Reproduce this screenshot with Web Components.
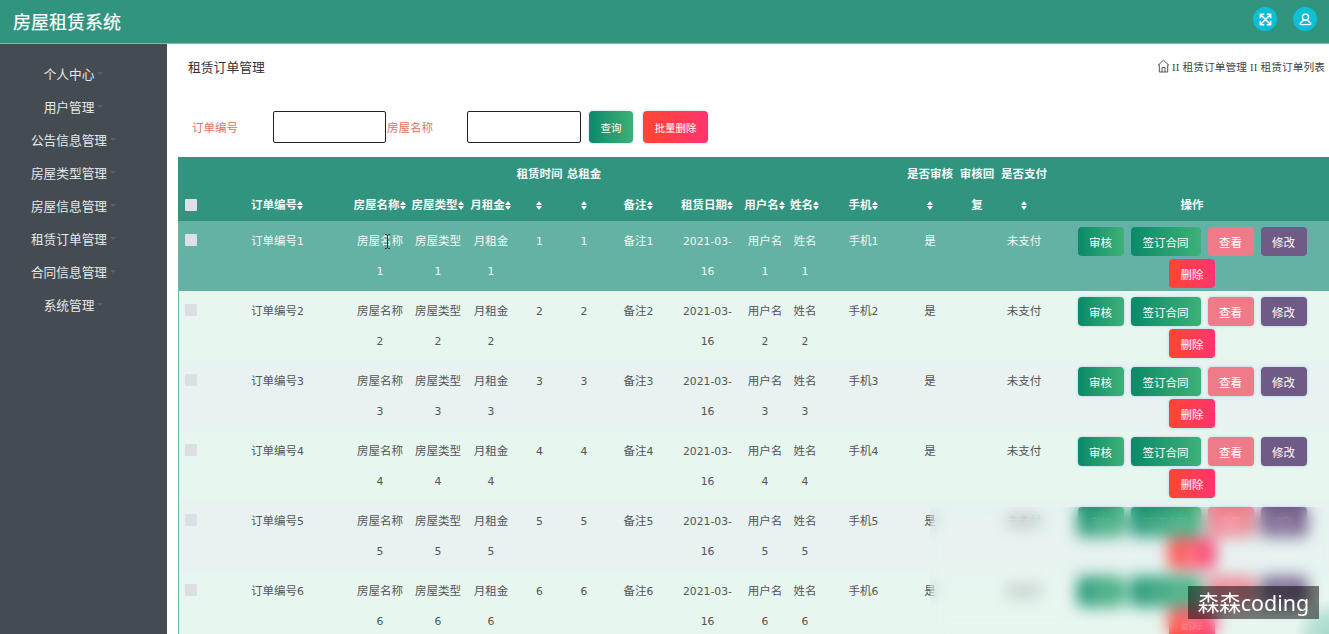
<!DOCTYPE html>
<html lang="zh"><head><meta charset="utf-8">
<style>
html,body{margin:0;height:100%;overflow:hidden;background:#fff;font-family:"Liberation Sans","Noto Sans CJK SC",sans-serif}
app-shell{display:block;height:634px}
</style></head>
<body>
<app-shell></app-shell>
<script>
const def=(name,html,setup)=>customElements.define(name,class extends HTMLElement{
  connectedCallback(){ if(this.shadowRoot) return; const r=this.attachShadow({mode:'open'}); r.innerHTML=typeof html==='function'?html(this):html; setup&&setup(r,this);} });

def('top-bar',`<style>
:host{display:flex;align-items:center;height:43px;background:#31947f;border-bottom:1px solid #7dbdb0;color:#fff}
.t{font-size:18px;margin:0 0 2px 13px;flex:1;-webkit-text-stroke:.2px #fff}
.c{width:24px;height:24px;border-radius:50%;background:#0fbfd6;display:flex;align-items:center;justify-content:center;margin:0 16px 5px 0}
.c:last-child{margin-right:12px}
svg{width:15px;height:15px;fill:none;stroke:#fff;stroke-width:1.4;stroke-linecap:round;stroke-linejoin:round}
</style><div class="t">房屋租赁系统</div>
<div class="c"><svg viewBox="0 0 16 16" style="stroke-width:1.6"><path d="M3.500 3.500l9 9M12.500 3.500l-9 9M2.500 6V2.500H6M10 2.500h3.500V6M2.500 10v3.500H6M13.500 10v3.500H10"/></svg></div>
<div class="c"><svg viewBox="0 0 16 16"><circle cx="8" cy="5.500" r="3.300"/><path d="M5.800 8.300C5.500 10 3.200 10.500 2.500 12c-.3.700 0 1.500.8 1.500h9.400c.8 0 1.100-.8.800-1.500-.7-1.500-3-2-3.300-3.700"/></svg></div>`);

def('side-nav',h=>`<style>
:host{display:block;width:167px;background:#444c52;padding:13px 30px 0 0;flex:none;box-sizing:border-box}
div{height:33px;display:flex;align-items:center;justify-content:center;color:#e6e8e8;font-size:12.700px}
i{flex:none;width:0;height:0;border:3.500px solid transparent;border-top-color:#5a6267;border-bottom:0;margin:0 -10px 0 3px}
</style>`+['个人中心','用户管理','公告信息管理','房屋类型管理','房屋信息管理','租赁订单管理','合同信息管理','系统管理'].map(t=>`<div><span>${t}</span><i></i></div>`).join(''));

def('crumb-bar',`<style>
:host{display:flex;align-items:center;height:46px;padding:0 4px 2px 21px;box-sizing:border-box;color:#333}
.t{flex:1;font-size:12.800px}
.b{font-size:10.700px;display:flex;align-items:center;gap:2px;color:#444;letter-spacing:.08px}
em{font:normal 10.700px "Liberation Serif",serif}
svg{width:13px;height:14px;fill:none;stroke:#555;stroke-width:1}
</style><span class="t">租赁订单管理</span>
<span class="b"><svg viewBox="0 0 13 14"><path d="M.8 6.500L6.500 1.200 12.200 6.500M2.300 5.500V13h8.400V5.500M5 13V8.500h3V13"/></svg><span><em>II</em> 租赁订单管理 <em>II</em> 租赁订单列表</span></span>`);

def('grad-btn',`<style>
:host{display:inline-flex;align-items:center;justify-content:center;height:29px;width:46px;box-sizing:border-box;border-radius:4px;color:#fff;font-size:11.500px;line-height:normal;
 background:var(--bg);box-shadow:0 0 3px rgba(120,170,240,.55)}
</style><slot></slot>`);

def('search-bar',`<style>
:host{display:flex;align-items:center;height:32px;margin:21px 0 14px;padding-left:25px;font-size:11.500px;color:#e2735c}
input{box-sizing:border-box;width:113px;height:32px;border:1px solid #222;border-radius:2px;background:#fff;padding:0;margin:0}
input+span+input{width:114px}
.l1{width:81px}.l2{width:80px;margin-left:1px}
grad-btn{height:32px;font-size:10.500px}
.q{width:44px;margin-left:8px;--bg:linear-gradient(90deg,#0a8a6a,#3fb077)}
.d{width:65px;margin-left:10px;--bg:linear-gradient(90deg,#ff4530,#ff3470)}
</style><span class="l1">订单编号</span><input aria-label="订单编号"><span class="l2">房屋名称</span><input aria-label="房屋名称">
<grad-btn class="q">查询</grad-btn><grad-btn class="d">批量删除</grad-btn>`);

const widths=[26,147,58,58,48,49,40,69,69,46,34,83,50,44,50,286];
const heads=['','订单编号','房屋名称','房屋类型','月租金','租赁时间','总租金','备注','租赁日期','用户名','姓名','手机','是否审核','审核回复','是否支付','操作'];
const sort=new Set([1,2,3,4,5,6,7,8,9,10,11,12,14]);
const arrows=`<span class="s"></span>`;
const rows=[1,2,3,4,5,6];
const num=t=>`<span class="d">${t}</span>`;
def('order-table',`<style>
:host{display:block;margin-left:11px;width:1157px}
table{border-collapse:collapse;table-layout:fixed;width:1157px;font-size:11.500px;text-align:center;color:#555}
th{background:#31947f;color:#f4f8f7;font-weight:700;line-height:31px;padding:2px 0 0;vertical-align:bottom;height:64px;box-sizing:border-box;word-break:break-all}
td{padding:5px 0;line-height:30px;height:60px;vertical-align:top;overflow:hidden}
td:last-child{padding:0}
.d{font-family:"DejaVu Sans",sans-serif;font-size:10.800px;line-height:1}
tbody tr{background:#e7f2f1}
tbody tr:nth-child(even){background:#e8f6f0}
tbody tr:first-child{background:#63b2a3;color:#f2f8f6}
tbody td:first-child{box-shadow:inset 1px 0 0 #6fb5a7}
.cb{display:block;width:12px;height:12px;margin:8px 0 0 7px;background:#dde1e6;border-radius:1px}
tbody tr:not(:first-child) .cb{background:#dcdfe3}
th .cb{margin:0 0 10px 7px}
.s{display:inline-block;width:7px;height:9px;vertical-align:-1px;position:relative}
.s:before,.s:after{content:"";position:absolute;left:0;border:3.500px solid transparent}
.s:before{top:0;border-bottom:4px solid #f4f8f7;border-top:0}
.s:after{bottom:0;border-top:4px solid #f4f8f7;border-bottom:0}
.ops{display:flex;flex-wrap:wrap;justify-content:center;align-content:flex-start;gap:3px 7px;padding:6px 28px 0;box-sizing:border-box;height:70px}
grad-btn.a{--bg:linear-gradient(90deg,#0a8a68,#3fb078)}
grad-btn.b{width:70px;--bg:linear-gradient(90deg,#0a8a68,#3fb078)}
grad-btn.c{--bg:#ef7b88}
grad-btn.e{--bg:#705a86}
grad-btn.f{--bg:linear-gradient(90deg,#ff4530,#ff3470)}
td.n{padding-left:4px;padding-right:4px}
td.p{padding-left:8px;padding-right:8px}
</style>
<table><colgroup>${widths.map(w=>`<col style="width:${w}px">`).join('')}</colgroup>
<thead><tr>${heads.map((h,i)=>i==0?`<th><span class="cb"></span></th>`:`<th>${h}${sort.has(i)?arrows:''}</th>`).join('')}</tr></thead>
<tbody>${rows.map(n=>`<tr><td><span class="cb"></span></td><td>订单编号${num(n)}</td><td class="n">房屋名称 ${num(n)}</td><td class="n">房屋类型 ${num(n)}</td><td class="n">月租金 ${num(n)}</td><td>${num(n)}</td><td>${num(n)}</td><td>备注${num(n)}</td><td class="p">${num('2021-03-16')}</td><td class="n">用户名 ${num(n)}</td><td class="n">姓名 ${num(n)}</td><td>手机${num(n)}</td><td>是</td><td></td><td>未支付</td>
<td><div class="ops"><grad-btn class="a">审核</grad-btn><grad-btn class="b">签订合同</grad-btn><grad-btn class="c">查看</grad-btn><grad-btn class="e">修改</grad-btn><grad-btn class="f">删除</grad-btn></div></td></tr>`).join('')}</tbody></table>`);

def('blur-patch',`<style>:host{display:block;position:absolute;left:930px;top:507px;right:0;bottom:0;backdrop-filter:blur(8px);background:radial-gradient(circle at 100% 100%,rgba(150,210,195,.8) 0,rgba(150,210,195,.55) 18px,rgba(150,210,195,0) 34px)}</style>`);
def('water-mark',`<style>:host{display:block;position:absolute;left:1188px;top:586px;width:131px;height:33px;background:rgba(0,0,0,.5);color:#fff;font:21.500px/33px "Noto Sans","Noto Sans CJK SC",sans-serif;text-align:center;white-space:nowrap}</style>森森coding`);
def('text-cursor',`<style>:host{display:block;position:absolute;left:384px;top:234px;width:7px;height:15px}svg{display:block}</style><svg width="7" height="15" viewBox="0 0 7 15" fill="none" stroke="#333" stroke-width="1"><path d="M1 .5h1.500L3.500 1.500 4.500 .5H6M3.500 1.500v12M1 14.500h1.500l1-1 1 1H6"/></svg>`);

def('app-shell',`<style>
:host{display:flex;flex-direction:column;height:634px;overflow:hidden;position:relative}
.b{display:flex;flex:1;min-height:0}
main{flex:1;min-width:0;overflow:hidden}
</style><top-bar></top-bar><div class="b"><side-nav></side-nav><main><crumb-bar></crumb-bar><search-bar></search-bar><order-table></order-table></main></div>
<text-cursor></text-cursor><blur-patch></blur-patch><water-mark></water-mark>`);
</script>
</body></html>
